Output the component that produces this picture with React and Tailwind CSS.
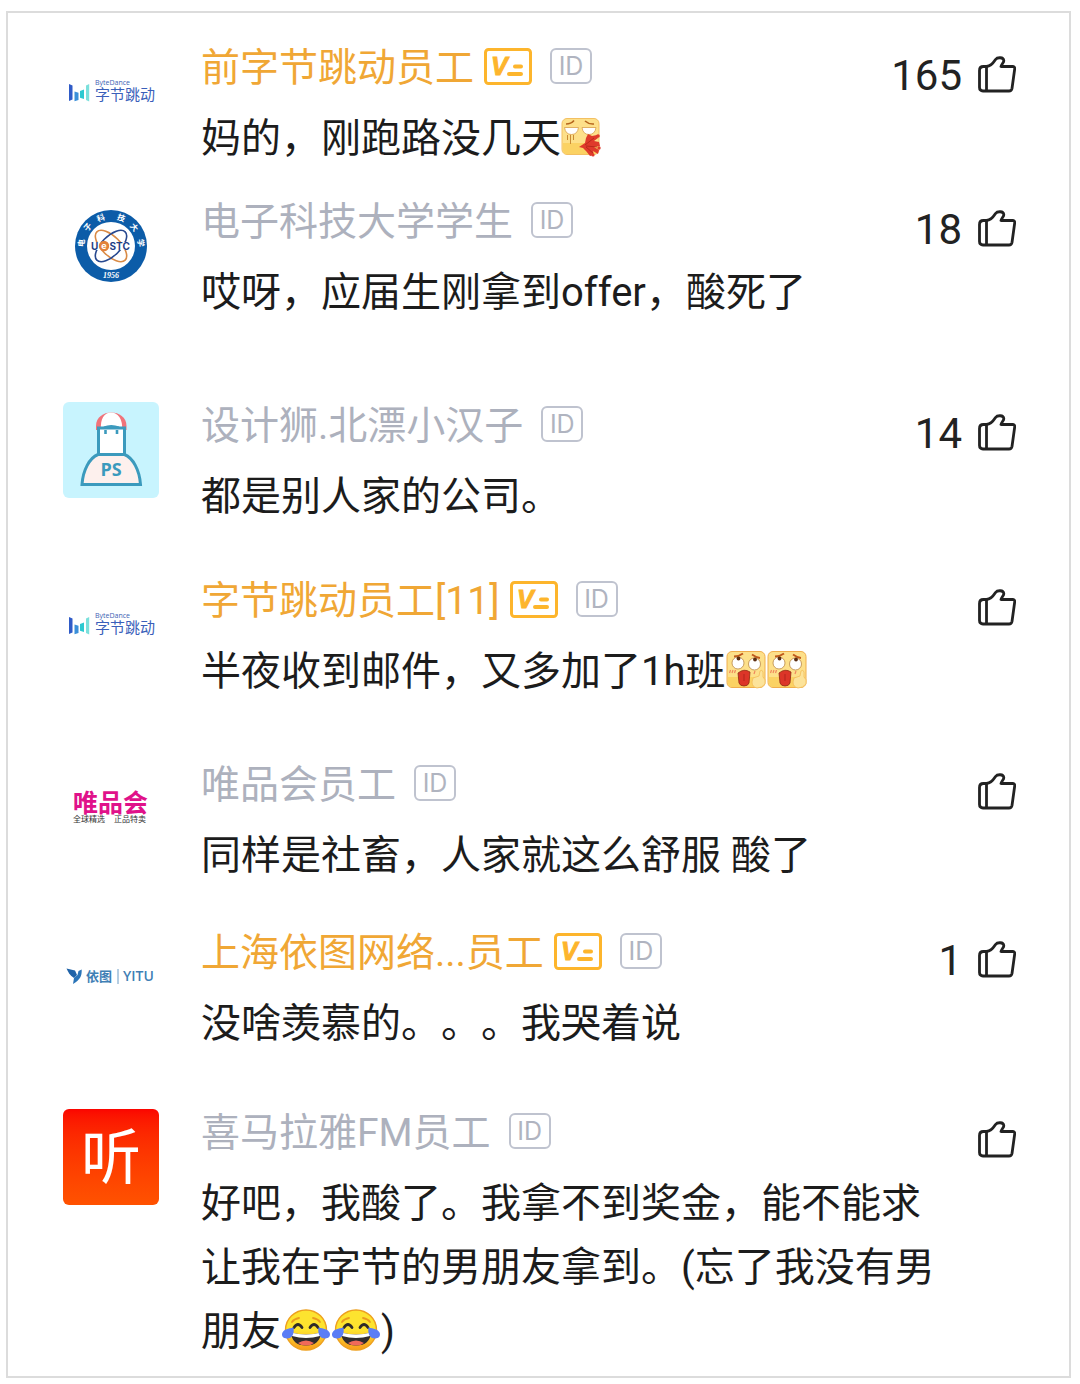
import React, { Fragment, useState } from 'react'
import clsx from 'clsx'

const comments = [
  {
    id: 1,
    avatar: 'bytedance',
    name: '前字节跳动员工',
    verified: true,
    likes: 165,
    body: ['妈的，刚跑路没几天', { emoji: 'blood' }],
    space: 'mb-[26px]',
  },
  {
    id: 2,
    avatar: 'uestc',
    name: '电子科技大学学生',
    likes: 18,
    body: ['哎呀，应届生刚拿到offer，酸死了'],
    space: 'mb-[76px]',
  },
  {
    id: 3,
    avatar: 'designer',
    name: '设计狮.北漂小汉子',
    likes: 14,
    body: ['都是别人家的公司。'],
    space: 'mb-[47px]',
  },
  {
    id: 4,
    avatar: 'bytedance',
    name: '字节跳动员工[11]',
    verified: true,
    likes: 0,
    body: ['半夜收到邮件，又多加了1h班', { emoji: 'shock' }, { emoji: 'shock' }],
    space: 'mb-14',
  },
  {
    id: 5,
    avatar: 'vip',
    name: '唯品会员工',
    likes: 0,
    body: ['同样是社畜，人家就这么舒服 酸了'],
    space: 'mb-10',
  },
  {
    id: 6,
    avatar: 'yitu',
    name: '上海依图网络...员工',
    verified: true,
    likes: 1,
    body: ['没啥羡慕的。。。我哭着说'],
    space: 'mb-[52px]',
  },
  {
    id: 7,
    avatar: 'ximalaya',
    name: '喜马拉雅FM员工',
    likes: 0,
    body: [
      '好吧，我酸了。我拿不到奖金，能不能求让我在字节的男朋友拿到。(忘了我没有男朋友',
      { emoji: 'joy' },
      { emoji: 'joy' },
      ')',
    ],
    space: '',
  },
]

function ByteDanceLogo() {
  return (
    <svg viewBox="0 0 96 96" className="w-24 h-24">
      <path d="M6 40l3.5 1.5v14L6 57z" fill="#2f5bc7" />
      <path d="M11.5 47.5l4 1.2v7.2l-4 1.3z" fill="#3a8fd9" />
      <path d="M17 47l4-1.5V55l-4-1.3z" fill="#2cc9d0" />
      <path d="M23 41.5l3.2-1.5v17.5L23 56z" fill="#7be0dc" />
      <text x="32" y="41" fontSize="7" fill="#3c62b4" className="font-['Open_Sans',sans-serif] font-medium">ByteDance</text>
      <text x="32" y="56" fontSize="15" fill="#3a5fba" className="font-['Noto_Sans_CJK_SC',sans-serif]">字节跳动</text>
    </svg>
  )
}

function UestcLogo() {
  const ring = [
    ['电', -84],
    ['子', -51],
    ['科', -20],
    ['技', 20],
    ['大', 51],
    ['学', 84],
  ]
  return (
    <svg viewBox="0 0 96 96" className="w-24 h-24">
      <circle cx="48" cy="48" r="36" fill="#0c5ca8" />
      <circle cx="48" cy="48" r="24" fill="#fff" />
      {ring.map(([char, angle]) => (
        <text
          key={char}
          x="48"
          y="21"
          fontSize="8"
          textAnchor="middle"
          fill="#fff"
          transform={`rotate(${angle} 48 48)`}
          className="font-['Noto_Sans_CJK_SC',sans-serif] font-bold"
        >
          {char}
        </text>
      ))}
      <text x="48" y="80" fontSize="8" textAnchor="middle" fill="#fff" className="font-['Liberation_Serif',serif] font-bold italic">1956</text>
      <g fill="none" strokeWidth="1.6">
        <ellipse cx="48" cy="48" rx="20" ry="9.500" stroke="#d98a45" transform="rotate(45 48 48)" />
        <ellipse cx="48" cy="48" rx="20" ry="9.500" stroke="#27488f" transform="rotate(-45 48 48)" />
      </g>
      <rect x="28" y="44" width="40" height="8" fill="#fff" />
      <circle cx="41" cy="48" r="5.200" fill="#e2823a" />
      <g className="font-['Inter',sans-serif] font-bold">
        <text x="28" y="51.500" fontSize="10" fill="#1f3f86">U</text>
        <text x="38.300" y="51" fontSize="9" fill="#fff">e</text>
        <text x="46.500" y="51.500" fontSize="10" fill="#1f3f86">STC</text>
      </g>
    </svg>
  )
}

function DesignerAvatar() {
  return (
    <svg viewBox="0 0 96 96" className="w-24 h-24 rounded-md bg-[#c8f4fe]">
      <path d="M33 28V24C33 6 63.500 6 63.500 24V28z" fill="#f0737a" />
      <path d="M38 28C37 17 41 10.500 48 10.500S60 17 59 28z" fill="#fff" />
      <path d="M35.500 26h26v27h-26z" fill="#fff" stroke="#3b9abd" strokeWidth="3" />
      <path d="M41 25.500Q48 22.500 56 25.500" fill="none" stroke="#3b9abd" strokeWidth="2" />
      <path d="M42.500 28v4M54 28v4" stroke="#3b9abd" strokeWidth="2.600" />
      <path d="M35 52.500H61.500C70 56 76.500 68 77.500 82.500H19C20 68 26.500 56 35 52.500z" fill="#fdf0ed" stroke="#3b9abd" strokeWidth="3" />
      <text x="48" y="73.500" fontSize="18" textAnchor="middle" fill="#3b9abd" className="font-['Open_Sans',sans-serif] font-bold">PS</text>
    </svg>
  )
}

function VipLogo() {
  return (
    <svg viewBox="0 0 96 96" className="w-24 h-24">
      <g className="font-['Noto_Sans_CJK_SC',sans-serif]">
        <text x="10" y="51" fontSize="25" fill="#e0128a" className="font-bold">唯品会</text>
        <text x="10" y="61" fontSize="8" fill="#333">全球精选</text>
        <text x="51" y="61" fontSize="8" fill="#333">正品特卖</text>
      </g>
    </svg>
  )
}

function YituLogo() {
  return (
    <svg viewBox="0 0 96 96" className="w-24 h-24">
      <path d="M3.500 39.500L12 41.500L14 46L11 49C7 46.500 5 43 3.500 39.500z" fill="#1f63a8" />
      <path d="M18.700 40.500C19 47 17 51 10 55L11 49L14.500 46L15.500 42z" fill="#2a74b8" />
      <text x="23" y="52" fontSize="13" fill="#3f7fb5" className="font-['Noto_Sans_CJK_SC',sans-serif] font-bold">依图</text>
      <path d="M55 40v15" stroke="#6b9cc6" strokeWidth="1" />
      <text x="60" y="52" fontSize="14" fill="#3f7fb5" className="font-['Open_Sans',sans-serif] font-semibold">YITU</text>
    </svg>
  )
}

function XimalayaLogo() {
  return (
    <svg viewBox="0 0 96 96" className="w-24 h-24 rounded-md bg-linear-to-b from-[#fb0500] to-[#ff5200]">
      <text x="48" y="70" fontSize="60" textAnchor="middle" fill="#fff" className="font-['Noto_Sans_CJK_SC',sans-serif]">听</text>
    </svg>
  )
}

const avatars = {
  bytedance: ByteDanceLogo,
  uestc: UestcLogo,
  designer: DesignerAvatar,
  vip: VipLogo,
  yitu: YituLogo,
  ximalaya: XimalayaLogo,
}

function BloodEmoji() {
  return (
    <svg viewBox="0 0 40 40" className="inline-block w-10 h-10 align-middle -mt-2">
      <rect x="1" y="1.500" width="37" height="36" rx="5" fill="#fde08a" stroke="#f3c062" />
      <path d="M2 26h35v7q0 4-4 4H6q-4 0-4-4z" fill="#fbd263" />
      <path d="M5 7q5 0 8-3.500M24 4q4 3.500 9 3" fill="none" stroke="#b5651d" strokeWidth="1.600" />
      <path d="M3.500 10.500h14q-1 7-7 7t-7-7zM21 10.500h14q-1 7-7 7t-7-7z" fill="#fff" stroke="#d9a04a" strokeWidth=".8" />
      <path d="M6.500 18v5M9.500 18v9M12.500 18v5" stroke="#c98a35" strokeWidth="1" />
      <path d="M18 30l6-4 1-5 2-4 4 2 5-1 1 3-4 3 5 1 1 4-6 1 5 3-1 4-5-3 1 4-4 1-4-5-3-3z" fill="#df3a2b" />
      <path d="M24 28l9-7M25 29l11 1M25 30l7 6" stroke="#b02318" strokeWidth=".8" />
      <circle cx="37" cy="19" r="1.800" fill="#df3a2b" />
      <circle cx="38" cy="31" r="1.700" fill="#df3a2b" />
      <circle cx="32" cy="38" r="1.600" fill="#df3a2b" />
    </svg>
  )
}

function ShockEmoji() {
  return (
    <svg viewBox="0 0 40 40" className="inline-block w-10 h-10 align-middle -mt-2 mr-px">
      <rect x="1" y="1.500" width="38" height="36" rx="5" fill="#fde08a" stroke="#f0ae4c" />
      <path d="M2 27h36v6q0 4-4 4H6q-4 0-4-4z" fill="#fbd263" />
      <path d="M8 6.500q5 0 9-3M26 4.500q4 3 8 3.500" fill="none" stroke="#c05a1c" strokeWidth="1.800" />
      <circle cx="12" cy="13" r="6" fill="#fff" stroke="#b98745" strokeWidth=".8" />
      <circle cx="28.500" cy="14" r="6" fill="#fff" stroke="#b98745" strokeWidth=".8" />
      <circle cx="12.500" cy="8.500" r="1.900" fill="#5a2d12" />
      <circle cx="29" cy="9.500" r="1.900" fill="#5a2d12" />
      <path d="M3.500 23l1-3M6 23l1-3M8.500 23l1-3M28 24l1-3" stroke="#f0875e" strokeWidth="1.200" />
      <path d="M12 23q6-5 12-1l-1 11q-1 3-5 3t-5-3z" fill="#dc3528" stroke="#8f2a12" strokeWidth=".8" />
      <path d="M18 24v7" stroke="#b3251c" strokeWidth="1" />
      <path d="M27 28l6-2 1-5q2-2 3 1v5q3 2 2 7-3 4-8 4-5-1-5-6z" fill="#fce39a" stroke="#f3bd59" strokeWidth=".8" />
    </svg>
  )
}

function JoyEmoji() {
  return (
    <svg viewBox="0 0 50 44" className="inline-block w-[50px] h-11 align-middle -mt-2">
      <defs>
        <linearGradient id="joy-face" x1="0" y1="0" x2="0" y2="1">
          <stop offset="0.5" stopColor="#fde32f" />
          <stop offset="1" stopColor="#f99a1c" />
        </linearGradient>
      </defs>
      <ellipse cx="25" cy="22" rx="20.500" ry="20" fill="url(#joy-face)" stroke="#eda01f" strokeWidth="1.400" />
      <path d="M11 14q2-3 7-4M32 10q5 1 7 4" fill="none" stroke="#eb9a1e" strokeWidth="1.800" strokeLinecap="round" />
      <path d="M13 19.500q4-6 8 0M29 19.500q4-6 8 0" fill="none" stroke="#302c2a" strokeWidth="2.800" strokeLinecap="round" />
      <path d="M10 24.500q15 4 30 0-1 13-15 13t-15-13z" fill="#302c2e" />
      <path d="M10 24.500q15 4 30 0l-1 3.500q-14 4-28 0z" fill="#fff" />
      <path d="M17 35q8-5 16 0-3 2.500-8 2.500t-8-2.500z" fill="#f0695a" />
      <path d="M12.500 19.500c1 6-1 11-6.500 11-4 0-6-3-4.500-6s6-4 11-5zM37.500 19.500c-1 6 1 11 6.500 11 4 0 6-3 4.500-6s-6-4-11-5z" fill="#5b7df5" />
    </svg>
  )
}

const emojis = { blood: BloodEmoji, shock: ShockEmoji, joy: JoyEmoji }

function VerifiedBadge() {
  return (
    <svg viewBox="0 0 48 37" className="w-12 h-[37px] ml-2.5 shrink-0">
      <rect x="1.500" y="1.500" width="45" height="34" rx="3" fill="none" stroke="#fdb52c" strokeWidth="3" />
      <text x="7" y="27" fontSize="25" fill="#fdb52c" stroke="#fdb52c" strokeWidth="1" className="font-['Liberation_Sans',sans-serif] font-bold italic">V</text>
      <path d="M31 18.500H37M25 26H37" stroke="#fdb52c" strokeWidth="4" strokeLinecap="round" />
    </svg>
  )
}

function IdBadge() {
  return (
    <span className="flex items-center justify-center w-[42px] h-9 ml-[18px] shrink-0 rounded-md border-2 border-[#bfc3cf] font-['Inter',sans-serif] text-[25px] leading-none text-[#b0b4c0]">
      ID
    </span>
  )
}

function LikeButton({ count }) {
  const [liked, setLiked] = useState(false)
  const total = count + (liked ? 1 : 0)

  return (
    <button
      onClick={() => setLiked(!liked)}
      aria-label="点赞"
      aria-pressed={liked}
      className="flex items-center gap-4 h-16 ml-auto shrink-0 text-[42px] text-[#222]"
    >
      {total > 0 && <span>{total}</span>}
      <svg viewBox="0 0 38 38" className="w-[38px] h-[38px]" fill="none" stroke="currentColor" strokeWidth="2.800" strokeLinejoin="round">
        <path d="M8.500 10.500C14 10 15.500 6.500 17.500 3.500C19.500 1 25.500 1 25.800 4.500C26 6.500 23.500 8 23 10.500H34.500Q37 10.500 36.700 13L34 32.500Q33.500 35 31 35H5Q1.500 35 1.500 31.500V14.500Q1.500 10.500 5.500 10.500z" />
        <path d="M8.500 10.500V35" />
      </svg>
    </button>
  )
}

function Comment({ comment }) {
  const Avatar = avatars[comment.avatar]

  return (
    <li className={clsx('flex items-start gap-[42px]', comment.space)}>
      <div className="shrink-0 pt-px">
        <Avatar />
      </div>
      <div className="flex-1 min-w-0">
        <div className="flex items-start h-16">
          <div className="flex items-center h-[46px]">
            <span className={clsx('pt-1 text-[39px] leading-12 whitespace-nowrap', comment.verified ? 'text-[#f0a735]' : 'text-[#adb1bd]')}>
              {comment.name}
            </span>
            {comment.verified && <VerifiedBadge />}
            <IdBadge />
          </div>
          <LikeButton count={comment.likes} />
        </div>
        <p className="pr-16 text-[40px] leading-16 text-[#1c1c1c] [text-spacing-trim:space-all]">
          {comment.body.map((part, i) => {
            if (typeof part === 'string') return <Fragment key={i}>{part}</Fragment>
            const Emoji = emojis[part.emoji]
            return <Emoji key={i} />
          })}
        </p>
      </div>
    </li>
  )
}

export default function App() {
  return (
    <main className="bg-white pt-[11px] pb-1.5 pl-1.5 pr-[9px] font-['Roboto','Noto_Sans_CJK_SC',sans-serif]">
      <ul className="border-2 border-[#dcdcdc] pt-[30px] pb-3 pl-[55px] pr-[53px]">
        {comments.map((comment) => (
          <Comment key={comment.id} comment={comment} />
        ))}
      </ul>
    </main>
  )
}
